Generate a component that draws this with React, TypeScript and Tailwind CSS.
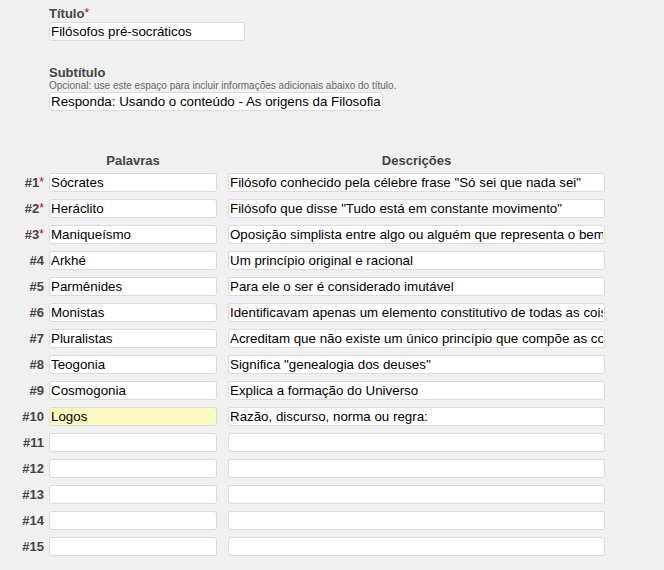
const rows: { word: string; desc: string; required?: boolean; highlight?: boolean }[] = [
  { word: 'Sócrates', desc: 'Filósofo conhecido pela célebre frase "Só sei que nada sei"', required: true },
  { word: 'Heráclito', desc: 'Filósofo que disse "Tudo está em constante movimento"', required: true },
  { word: 'Maniqueísmo', desc: 'Oposição simplista entre algo ou alguém que representa o bem e algo ou alguém que representa o mal', required: true },
  { word: 'Arkhé', desc: 'Um princípio original e racional' },
  { word: 'Parmênides', desc: 'Para ele o ser é considerado imutável' },
  { word: 'Monistas', desc: 'Identificavam apenas um elemento constitutivo de todas as coisas' },
  { word: 'Pluralistas', desc: 'Acreditam que não existe um único princípio que compõe as coisas' },
  { word: 'Teogonia', desc: 'Significa "genealogia dos deuses"' },
  { word: 'Cosmogonia', desc: 'Explica a formação do Universo' },
  { word: 'Logos', desc: 'Razão, discurso, norma ou regra:', highlight: true },
  { word: '', desc: '' },
  { word: '', desc: '' },
  { word: '', desc: '' },
  { word: '', desc: '' },
  { word: '', desc: '' },
];

const inputCls =
  'block h-[19px] rounded-[3px] border border-[#dadada] px-[1px] text-[13.33px] leading-[17px] text-black outline-none font-["Liberation_Sans",Arial,sans-serif]';

function Star() {
  return <span className="relative top-[-1px] text-[12px] leading-none font-normal text-[#c00]">*</span>;
}

export default function App() {
  return (
    <div className='min-h-[570px] w-[664px] bg-[#f0f0f0] pl-[49px] pt-[6px] font-["Liberation_Sans",Arial,sans-serif] text-[#444]'>
      {/* Título */}
      <div className="text-[13px] leading-[16px] font-bold">
        Título<Star />
      </div>
      <input className={`${inputCls} w-[196px] bg-white`} defaultValue="Filósofos pré-socráticos" />

      {/* Subtítulo */}
      <div className="mt-[24px] text-[13px] leading-[15px] font-bold">Subtítulo</div>
      <div className="text-[10px] leading-[12px] text-[#666]">
        Opcional: use este espaço para incluir informações adicionais abaixo do título.
      </div>
      <input
        className={`${inputCls} w-[334px] bg-white`}
        defaultValue="Responda: Usando o conteúdo - As origens da Filosofia"
      />

      {/* Tabela */}
      <div className="-ml-[49px] mt-[42px]">
        <div className="flex text-[13px] leading-[16px] font-bold">
          <div className="w-[49px]" />
          <div className="w-[168px] text-center">Palavras</div>
          <div className="ml-[11px] w-[377px] text-center">Descrições</div>
        </div>
        <div className="mt-[4px] flex flex-col gap-[7px]">
          {rows.map((r, i) => (
            <div key={i} className="flex items-center">
              <div className="w-[44px] text-right text-[13px] leading-[19px] font-bold">
                #{i + 1}
                {r.required && <Star />}
              </div>
              <input
                className={`${inputCls} ml-[5px] w-[168px] ${r.highlight ? 'bg-[#fafac0]' : 'bg-white'}`}
                defaultValue={r.word}
              />
              <input className={`${inputCls} ml-[11px] w-[377px] bg-white`} defaultValue={r.desc} />
            </div>
          ))}
        </div>
      </div>
    </div>
  );
}
